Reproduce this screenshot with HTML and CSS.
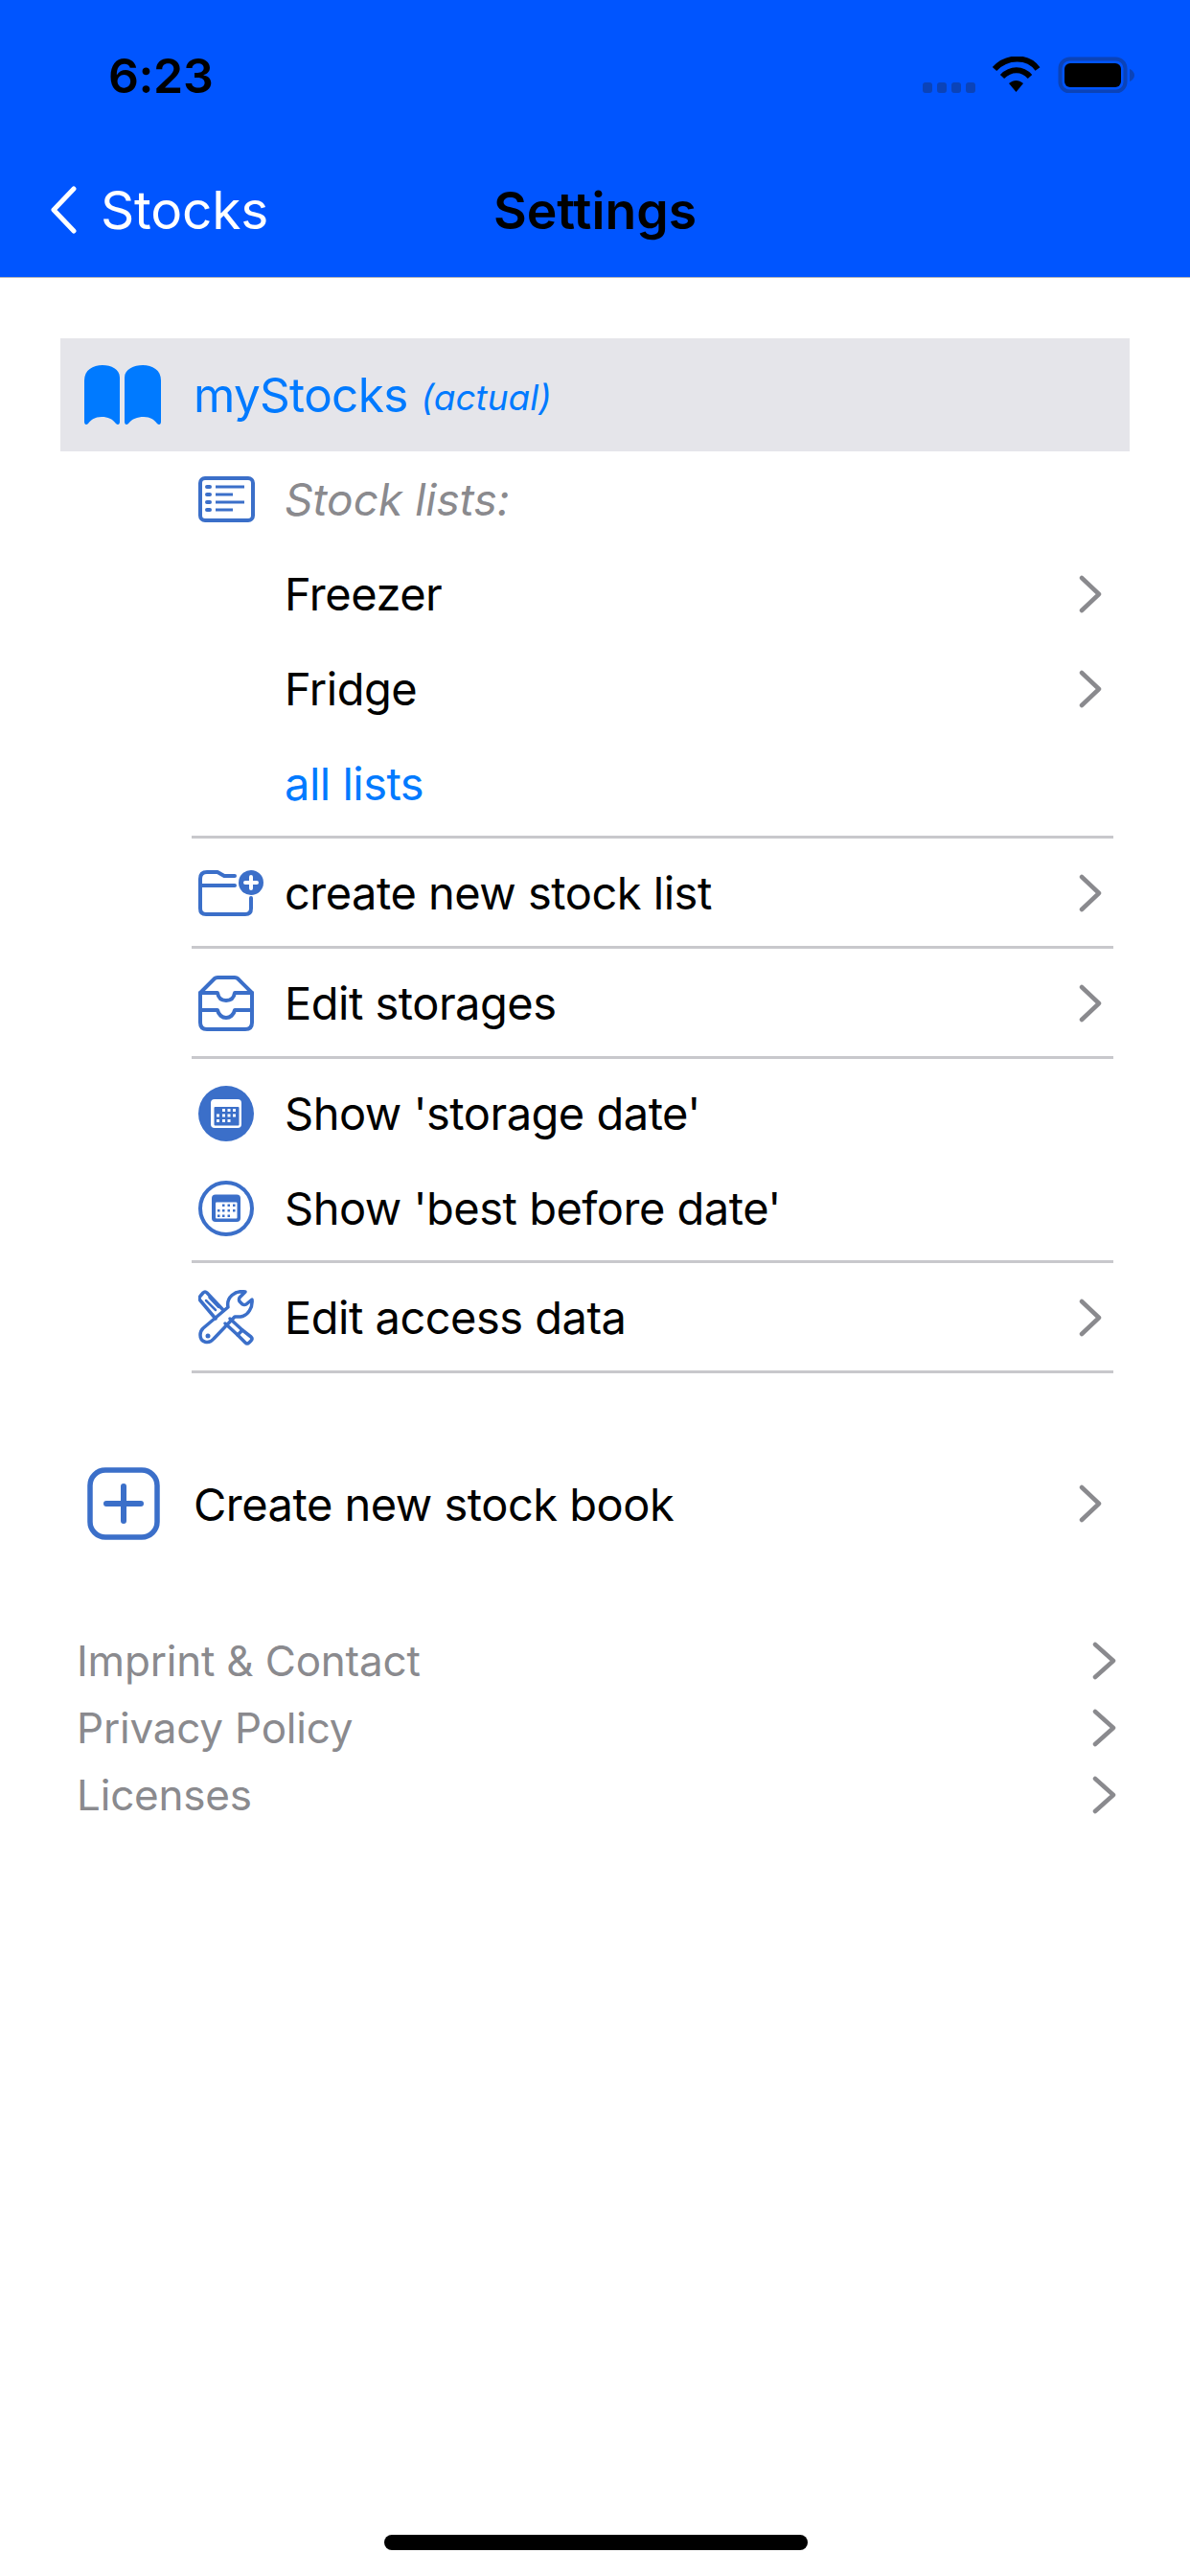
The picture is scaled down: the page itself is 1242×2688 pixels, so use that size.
FILE: index.html
```html
<!DOCTYPE html>
<html lang="en">
<head>
<meta charset="utf-8">
<title>Settings</title>
<link rel="stylesheet" href="styles.css">
</head>
<body>
<div class="page">
  <header class="header">
    <div class="status">
      <span class="time">6:23</span>
      <svg class="status-icons" width="221" height="38" viewBox="0 0 221 38">
        <g fill="#0b43b8">
          <rect x="0" y="27" width="10" height="11" rx="3"/>
          <rect x="15" y="27" width="10" height="11" rx="3"/>
          <rect x="30" y="27" width="10" height="11" rx="3"/>
          <rect x="45" y="27" width="10" height="11" rx="3"/>
        </g>
        <g fill="none" stroke="#000" stroke-width="6">
          <path d="M75 13 C88 -1 110 -1 120 13"/>
          <path d="M83 21 C92 12 104 12 112 21"/>
        </g>
        <path d="M90 28 C95 24 100 24 105 28 L97.500 37 Z"/>
        <rect x="143.500" y="2.500" width="68" height="34" rx="10" fill="none" stroke="#0b43b8" stroke-width="4"/>
        <rect x="148" y="7" width="59" height="25" rx="6"/>
        <path d="M216 13 C219 14 221 17 221 19.500 C221 22 219 25 216 26 Z" fill="#0b43b8"/>
      </svg>
    </div>
    <nav class="nav">
      <div class="back">
        <svg class="back-icon" width="29" height="50" viewBox="0 0 29 50"><path d="M25 3 L4 25 L25 47" fill="none" stroke="#fff" stroke-width="5" stroke-linecap="round" stroke-linejoin="round"/></svg>
        <span>Stocks</span>
      </div>
      <h1 class="title">Settings</h1>
      <div></div>
    </nav>
  </header>

  <main class="main">
    <section class="book-head">
      <svg class="book-icon" width="80" height="63" viewBox="0 0 80 63">
        <path fill="#007aff" d="M0 16 C0 5 9 0 19 0 C28 0 37 4 37 13 L37 59 C37 62 35 63 33 61 C29 56 25 54 18 54 C11 54 7 57 4 61 C2 63 0 62 0 59 Z"/>
        <path fill="#007aff" d="M80 16 C80 5 71 0 61 0 C52 0 42 4 42 13 L42 59 C42 62 44 63 46 61 C50 56 55 54 62 54 C69 54 73 57 76 61 C78 63 80 62 80 59 Z"/>
      </svg>
      <span class="book-name">myStocks</span>
      <span class="book-state">(actual)</span>
    </section>

    <div class="sub">
      <section class="group">
        <div class="row">
          <div class="slot">
            <svg width="59" height="48" viewBox="0 0 59 48" fill="none" stroke="#3b6fc9">
              <rect x="2" y="2" width="55" height="44" rx="5" stroke-width="4"/>
              <g stroke-width="3">
                <path d="M18 11 H48 M18 19 H36 M18 27 H48 M18 35 H36"/>
                <path d="M9 11 H12 M9 19 H12 M9 27 H12 M9 35 H12" stroke-linecap="round" stroke-width="4"/>
              </g>
            </svg>
          </div>
          <span class="caption">Stock lists:</span>
        </div>
        <div class="row"><div class="slot"></div><span class="label">Freezer</span><svg class="chev" width="24" height="40" viewBox="0 0 24 40"><path d="M3 3 L21 20 L3 37"/></svg></div>
        <div class="row"><div class="slot"></div><span class="label">Fridge</span><svg class="chev" width="24" height="40" viewBox="0 0 24 40"><path d="M3 3 L21 20 L3 37"/></svg></div>
        <div class="row"><div class="slot"></div><span class="label link">all lists</span></div>
      </section>

      <section class="group single">
        <div class="row">
          <div class="slot">
            <svg width="70" height="50" viewBox="0 0 70 50" fill="none" stroke="#3b6fc9" stroke-width="4" stroke-linecap="round" stroke-linejoin="round">
              <path d="M38 7 H27 L20 3 H9 Q2 3 2 10 V41 Q2 47 8 47 H49 Q55 47 55 41 V30"/>
              <path d="M2 17 H38"/>
              <circle cx="55" cy="14" r="13" fill="#3b6fc9" stroke="none"/>
              <path d="M55 8 V20 M49 14 H61" stroke="#fff"/>
            </svg>
          </div>
          <span class="label">create new stock list</span>
          <svg class="chev" width="24" height="40" viewBox="0 0 24 40"><path d="M3 3 L21 20 L3 37"/></svg>
        </div>
      </section>

      <section class="group single">
        <div class="row">
          <div class="slot">
            <svg width="58" height="58" viewBox="0 0 58 58" fill="none" stroke="#3b6fc9" stroke-width="4" stroke-linecap="round" stroke-linejoin="round">
              <path d="M2 18 L17 3 Q18 2 20 2 H38 Q40 2 41 3 L56 18 V49 Q56 56 49 56 H9 Q2 56 2 49 Z"/>
              <path d="M2 18 H20 C21 24 25 26 29 26 C33 26 37 24 38 18 H56"/>
              <path d="M2 36 H20 C21 41 25 44 29 44 C33 44 37 41 38 36 H56"/>
            </svg>
          </div>
          <span class="label">Edit storages</span>
          <svg class="chev" width="24" height="40" viewBox="0 0 24 40"><path d="M3 3 L21 20 L3 37"/></svg>
        </div>
      </section>

      <section class="group">
        <div class="row">
          <div class="slot">
            <svg width="58" height="58" viewBox="0 0 58 58">
              <circle cx="29" cy="29" r="29" fill="#3b6fc9"/>
              <rect x="13" y="14" width="32" height="30" rx="4" fill="#fff"/>
              <rect x="16.500" y="22" width="26" height="19.500" rx="1" fill="#3b6fc9"/>
              <g fill="#fff">
                <rect x="25" y="24" width="3" height="3"/><rect x="30.500" y="24" width="3" height="3"/><rect x="36" y="24" width="3" height="3"/>
                <rect x="19" y="29.500" width="3" height="3"/><rect x="25" y="29.500" width="3" height="3"/><rect x="30.500" y="29.500" width="3" height="3"/><rect x="36" y="29.500" width="3" height="3"/>
                <rect x="19" y="35" width="3" height="3"/><rect x="25" y="35" width="3" height="3"/><rect x="30.500" y="35" width="3" height="3"/>
              </g>
            </svg>
          </div>
          <span class="label">Show 'storage date'</span>
        </div>
        <div class="row">
          <div class="slot">
            <svg width="58" height="58" viewBox="0 0 58 58">
              <circle cx="29" cy="29" r="27" fill="none" stroke="#3b6fc9" stroke-width="4"/>
              <rect x="14" y="14.500" width="30" height="28.500" rx="4" fill="#3b6fc9"/>
              <rect x="18" y="22.500" width="22.500" height="17" rx="1" fill="#fff"/>
              <g fill="#3b6fc9">
                <rect x="25" y="24.500" width="2.500" height="2.500"/><rect x="30.500" y="24.500" width="2.500" height="2.500"/><rect x="36" y="24.500" width="2.500" height="2.500"/>
                <rect x="20" y="30" width="2.500" height="2.500"/><rect x="25" y="30" width="2.500" height="2.500"/><rect x="30.500" y="30" width="2.500" height="2.500"/><rect x="36" y="30" width="2.500" height="2.500"/>
                <rect x="20" y="35.500" width="2.500" height="2.500"/><rect x="25" y="35.500" width="2.500" height="2.500"/><rect x="30.500" y="35.500" width="2.500" height="2.500"/>
              </g>
            </svg>
          </div>
          <span class="label">Show 'best before date'</span>
        </div>
      </section>

      <section class="group single">
        <div class="row">
          <div class="slot">
            <svg width="58" height="58" viewBox="0 0 58 58" fill="none" stroke="#3b6fc9" stroke-width="3.500" stroke-linecap="round" stroke-linejoin="round">
              <path d="M26 21 L9 3 Q7 1 5 3 L2 6.500 Q0 9 2 11 L18 30"/>
              <path d="M8 11 L18 21 M11.500 8 L21 18" stroke-width="2.500"/>
              <path d="M33 30 L46 42 M28 35 L41 47"/>
              <path d="M41 47 L46 42 L55 49 Q57 51 55 53 L53 55 Q51 57 49 55 Z"/>
              <path d="M49 2 L43 8 Q42 10 43 12 L46 15 Q48 16 50 15 L56 10 C57 18 52 27 44 28 Q41 28 38 28 L16 51 C11 57 2 55 2 47 C2 44 3 42 5 40 L31 18 C29 8 38 0 49 2 Z"/>
              <circle cx="10" cy="48" r="2.500" fill="#3b6fc9" stroke="none"/>
            </svg>
          </div>
          <span class="label">Edit access data</span>
          <svg class="chev" width="24" height="40" viewBox="0 0 24 40"><path d="M3 3 L21 20 L3 37"/></svg>
        </div>
      </section>
    </div>

    <section class="create">
      <svg class="plus" width="76" height="76" viewBox="0 0 76 76" fill="none" stroke="#3b6fc9" stroke-linecap="round">
        <rect x="3" y="3" width="70" height="70" rx="16" stroke-width="5.500"/>
        <path d="M38 20 V56 M20 38 H56" stroke-width="6"/>
      </svg>
      <span class="label">Create new stock book</span>
      <svg class="chev" width="24" height="40" viewBox="0 0 24 40"><path d="M3 3 L21 20 L3 37"/></svg>
    </section>

    <section class="links">
      <div class="link-row"><span>Imprint &amp; Contact</span><svg class="chev" width="25" height="40" viewBox="0 0 25 40"><path d="M3 3 L22 20 L3 37"/></svg></div>
      <div class="link-row"><span>Privacy Policy</span><svg class="chev" width="25" height="40" viewBox="0 0 25 40"><path d="M3 3 L22 20 L3 37"/></svg></div>
      <div class="link-row"><span>Licenses</span><svg class="chev" width="25" height="40" viewBox="0 0 25 40"><path d="M3 3 L22 20 L3 37"/></svg></div>
    </section>
  </main>
  <div class="home"></div>
</div>
</body>
</html>
```
FILE: styles.css
```css
* { box-sizing: border-box; }
html, body { margin: 0; padding: 0; background: #fff; }
body { font-family: Inter, "Liberation Sans", sans-serif; color: #000; }
.page { position: relative; width: 1242px; height: 2688px; overflow: hidden; }

.header { height: 290px; background: #0055ff; border-bottom: 1px solid #b5b5b8; }
.status { display: flex; justify-content: space-between; align-items: flex-start; padding: 50px 58px 0 113px; height: 179px; }
.time { font-size: 50px; font-weight: 600; line-height: 58px; letter-spacing: -0.4px; }
.status-icons { margin-top: 9px; }

.nav { display: grid; grid-template-columns: 1fr auto 1fr; align-items: center; height: 80px; }
.back { display: flex; align-items: center; padding-left: 52px; color: #fff; font-size: 55px; gap: 24px; letter-spacing: -0.2px; }
.title { margin: 0; font-size: 53.500px; font-weight: 600; }

.main { padding: 63px 63px 0; }
.book-head { display: flex; align-items: center; height: 118px; padding-left: 25px; background: #e5e5ea; color: #007aff; }
.book-icon { flex: none; margin-right: 34px; }
.book-name { font-size: 49.500px; letter-spacing: -0.7px; }
.book-state { font-size: 37px; font-style: italic; margin: 5px 0 0 14px; }

.sub { margin-left: 137px; margin-right: 17px; }
.group { border-bottom: 3px solid #c8c8cc; padding-bottom: 5px; }
.group + .group { padding-top: 7px; }
.single { padding: 0 !important; }
.single .row { height: 112px; padding-top: 1px; }

.row { display: flex; align-items: center; height: 99px; padding-right: 12px; }
.slot { flex: none; width: 97px; padding-left: 7px; display: flex; align-items: center; }
.label { font-size: 47px; letter-spacing: -0.5px; flex: 1; }
.caption { font-size: 46px; font-style: italic; color: #8a8a8e; }
.link { color: #007aff; }
.chev { flex: none; fill: none; stroke: #8a8a8e; stroke-width: 4.500; stroke-linecap: round; stroke-linejoin: round; }

.create { display: flex; align-items: center; height: 76px; margin-top: 98px; padding: 0 29px 0 28px; }
.plus { flex: none; margin-right: 35px; }

.links { margin-top: 91px; padding: 0 14px 0 17px; }
.link-row { display: flex; justify-content: space-between; align-items: center; height: 70px; color: #8a8a8e; font-size: 44px; letter-spacing: -0.2px; }

.home { position: absolute; left: 401px; bottom: 27px; width: 442px; height: 16px; border-radius: 8px; background: #000; }
```
